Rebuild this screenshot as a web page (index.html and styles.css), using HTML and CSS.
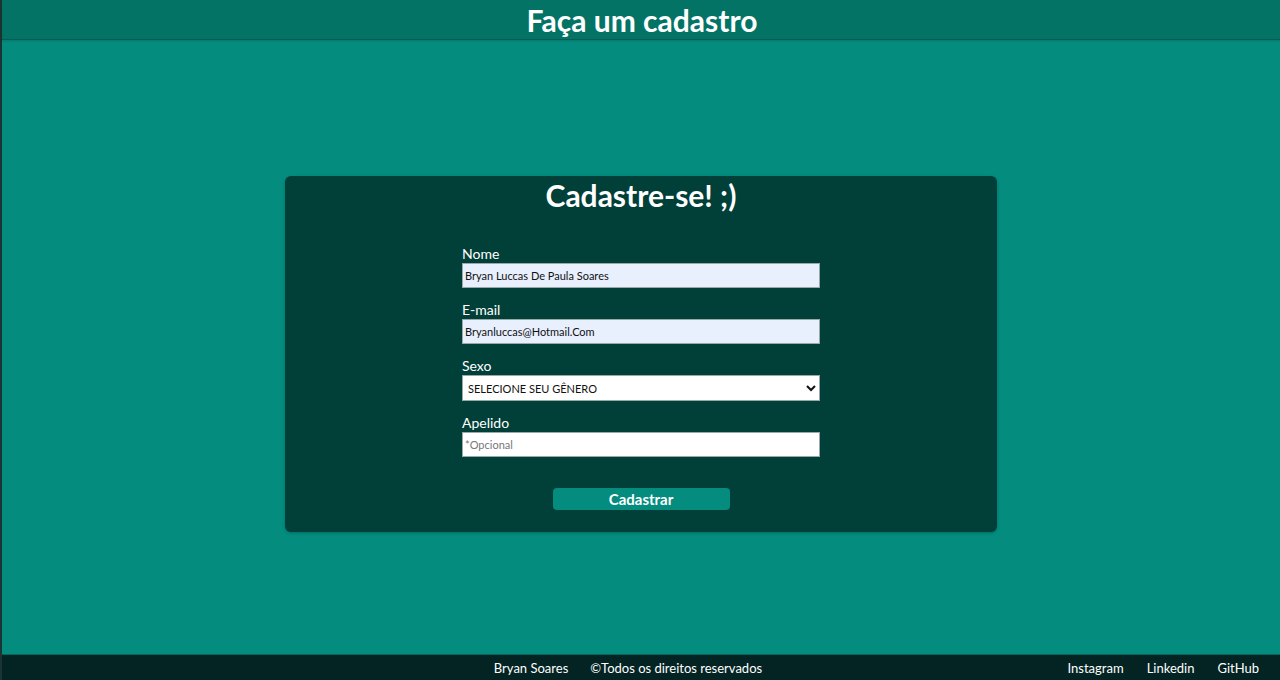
FILE: index.html
```html
<!DOCTYPE html>
<html lang="pt-BR">
<head>
<meta charset="utf-8">
<title>Faça um cadastro</title>
<link rel="stylesheet" href="styles.css">
</head>
<body>
<div class="page">
  <header class="topbar">
    <h1 class="topbar-title">Faça um cadastro</h1>
  </header>
  <main class="main">
    <section class="card">
      <h2 class="card-title">Cadastre-se! ;)</h2>
      <form class="form">
        <div class="field">
          <label class="label" for="nome">Nome</label>
          <input class="input input-filled" id="nome" type="text" value="Bryan Luccas De Paula Soares">
        </div>
        <div class="field">
          <label class="label" for="email">E-mail</label>
          <input class="input input-filled" id="email" type="email" value="Bryanluccas@Hotmail.Com">
        </div>
        <div class="field">
          <label class="label" for="sexo">Sexo</label>
          <select class="input select" id="sexo">
            <option>SELECIONE SEU GÊNERO</option>
          </select>
        </div>
        <div class="field">
          <label class="label" for="apelido">Apelido</label>
          <input class="input" id="apelido" type="text" placeholder="*Opcional">
        </div>
        <div class="actions">
          <button class="button" type="button">Cadastrar</button>
        </div>
      </form>
    </section>
  </main>
  <footer class="footer">
    <div class="footer-spacer"></div>
    <div class="footer-center">
      <span>Bryan Soares</span>
      <span>©Todos os direitos reservados</span>
    </div>
    <nav class="footer-links">
      <a href="#">Instagram</a>
      <a href="#">Linkedin</a>
      <a href="#">GitHub</a>
    </nav>
  </footer>
</div>
</body>
</html>
```
FILE: styles.css
```css
* { box-sizing: border-box; }
html, body { margin: 0; padding: 0; }
body {
  font-family: Lato, "Open Sans", sans-serif;
  background: #048c7f;
  color: #fff;
}
.page {
  height: 680px;
  display: flex;
  flex-direction: column;
  border-left: 2px solid #1c3434;
}
.topbar {
  height: 40px;
  background: #037366;
  border-bottom: 1px solid #045a50;
  box-shadow: 0 1px 2px rgba(0,0,0,0.15);
  display: flex;
  align-items: center;
  justify-content: center;
}
.topbar-title {
  margin: 0;
  font-size: 30px;
  font-weight: 700;
  line-height: 40px;
  letter-spacing: 0;
  margin-left: 2px;
}
.main {
  flex: 1;
  display: flex;
  justify-content: center;
  align-items: flex-start;
  padding-top: 136px;
}
.card {
  width: 712px;
  height: 356px;
  background: #013f39;
  border-radius: 6px;
  box-shadow: 0 1px 3px rgba(0,0,0,0.25);
}
.card-title {
  margin: 0;
  font-size: 30px;
  line-height: 38px;
  font-weight: 700;
  text-align: center;
}
.form {
  width: 358px;
  margin: 32px auto 0;
}
.field {
  margin-bottom: 14px;
}
.label {
  display: block;
  font-size: 14px;
  line-height: 16px;
  margin-bottom: 1px;
}
.input {
  display: block;
  width: 358px;
  height: 25px;
  margin: 0;
  padding: 0 2px;
  border: 1px solid #9aa8a6;
  background: #fff;
  color: #111;
  font-family: Lato, "Open Sans", sans-serif;
  font-size: 11px;
}
.input-filled { background: #e8f0fe; }
.input::placeholder { color: #777; }
.select {
  height: 26px;
  padding: 0 1px;
  border-radius: 0;
}
.actions {
  display: flex;
  justify-content: center;
  padding-top: 17px;
}
.button {
  width: 177px;
  height: 22px;
  border: none;
  border-radius: 4px;
  background: #048c7f;
  color: #fff;
  font-family: Lato, "Open Sans", sans-serif;
  font-size: 15px;
  font-weight: 700;
  padding: 0;
}
.footer {
  height: 26px;
  background: #032423;
  display: grid;
  grid-template-columns: 1fr auto 1fr;
  align-items: center;
  font-size: 13px;
  border-top: 1px solid #04665c;
}
.footer-center {
  display: flex;
  gap: 22px;
  margin-right: 26px;
}
.footer-links {
  justify-self: end;
  display: flex;
  gap: 23px;
  padding-right: 21px;
}
.footer-links a {
  color: #fff;
  text-decoration: none;
}
```
